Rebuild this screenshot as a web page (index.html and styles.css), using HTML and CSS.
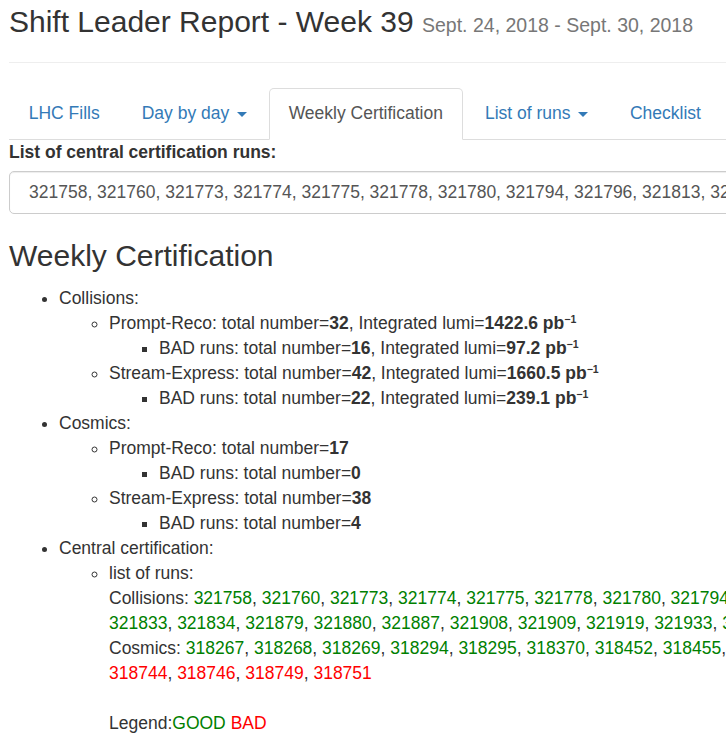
FILE: index.html
```html
<!DOCTYPE html>
<html lang="en">

<head>
    <meta charset="UTF-8">
    <meta name="viewport" content="width=device-width, initial-scale=1.0">
    <title>Shift Leader Report - Week 39</title>
    <link rel="stylesheet" href="styles.css">
</head>

<body>
    <div class="container">
        <div class="page-header">
            <h3>Shift Leader Report - Week 39 <small>Sept. 24, 2018 - Sept. 30, 2018</small></h3>
        </div>

        <ul class="nav-tabs">
            <li><a href="#">LHC Fills</a></li>
            <li><a href="#">Day by day <span class="caret"></span></a></li>
            <li class="active"><a href="#">Weekly Certification</a></li>
            <li><a href="#">List of runs <span class="caret"></span></a></li>
            <li><a href="#">Checklist</a></li>
        </ul>

        <div class="tab-content">
            <div class="form-group">
                <label for="runs">List of central certification runs:</label>
                <input type="text" id="runs" class="form-control" readonly
                    value="321758, 321760, 321773, 321774, 321775, 321778, 321780, 321794, 321796, 321813, 321833, 321834, 321879, 321880, 321887, 321908, 321909, 321919, 321933">
            </div>

            <h3 class="section">Weekly Certification</h3>
            <ul>
                <li>Collisions:
                    <ul>
                        <li>Prompt-Reco: total number=<b>32</b>, Integrated lumi=<b>1422.6 pb<sup>&minus;1</sup></b>
                            <ul>
                                <li>BAD runs: total number=<b>16</b>, Integrated lumi=<b>97.2 pb<sup>&minus;1</sup></b></li>
                            </ul>
                        </li>
                        <li>Stream-Express: total number=<b>42</b>, Integrated lumi=<b>1660.5 pb<sup>&minus;1</sup></b>
                            <ul>
                                <li>BAD runs: total number=<b>22</b>, Integrated lumi=<b>239.1 pb<sup>&minus;1</sup></b></li>
                            </ul>
                        </li>
                    </ul>
                </li>
                <li>Cosmics:
                    <ul>
                        <li>Prompt-Reco: total number=<b>17</b>
                            <ul>
                                <li>BAD runs: total number=<b>0</b></li>
                            </ul>
                        </li>
                        <li>Stream-Express: total number=<b>38</b>
                            <ul>
                                <li>BAD runs: total number=<b>4</b></li>
                            </ul>
                        </li>
                    </ul>
                </li>
                <li>Central certification:
                    <ul>
                        <li class="runs">list of runs:<br>
                            Collisions: <span class="good">321758</span>, <span class="good">321760</span>, <span class="good">321773</span>, <span class="good">321774</span>, <span class="good">321775</span>, <span class="good">321778</span>, <span class="good">321780</span>, <span class="good">321794</span>, <span class="good">321796</span>, <span class="good">321813</span>,<br>
                            <span class="good">321833</span>, <span class="good">321834</span>, <span class="good">321879</span>, <span class="good">321880</span>, <span class="good">321887</span>, <span class="good">321908</span>, <span class="good">321909</span>, <span class="good">321919</span>, <span class="good">321933</span>, <span class="good">321960</span>, <span class="good">321961</span><br>
                            Cosmics: <span class="good">318267</span>, <span class="good">318268</span>, <span class="good">318269</span>, <span class="good">318294</span>, <span class="good">318295</span>, <span class="good">318370</span>, <span class="good">318452</span>, <span class="good">318455</span>, <span class="good">318620</span>, <span class="good">318622</span>,<br>
                            <span class="bad">318744</span>, <span class="bad">318746</span>, <span class="bad">318749</span>, <span class="bad">318751</span><br>
                            <br>
                            Legend:<span class="good">GOOD</span> <span class="bad">BAD</span>
                        </li>
                    </ul>
                </li>
            </ul>
        </div>
    </div>
</body>

</html>
```

FILE: styles.css
```css
* {
    box-sizing: border-box;
}

html,
body {
    overflow: hidden;
}

body {
    margin: 0;
    font-family: "Liberation Sans", Arial, Helvetica, sans-serif;
    font-size: 17.5px;
    line-height: 25px;
    color: #333;
    background-color: #fff;
}

.container {
    width: 1200px;
    padding: 0 9px;
}

/* header */

.page-header {
    margin: 0 0 25px;
    padding-bottom: 7.25px;
    border-bottom: 1px solid #eee;
}

.page-header h3 {
    margin: 5px 0 12.5px;
    font-size: 30px;
    font-weight: 500;
    line-height: 33px;
}

.page-header small {
    font-size: 65%;
    font-weight: normal;
    color: #777;
}

/* tabs */

.nav-tabs {
    display: flex;
    margin: 0;
    padding: 0;
    list-style: none;
    border-bottom: 1px solid #ddd;
}

.nav-tabs li {
    margin-bottom: -1px;
}

.nav-tabs a {
    display: block;
    padding: 12.5px 18.75px;
    margin-right: 2.5px;
    line-height: 25px;
    color: #337ab7;
    text-decoration: none;
    border: 1px solid transparent;
    border-radius: 5px 5px 0 0;
}

.nav-tabs .active a {
    color: #555;
    background-color: #fff;
    border-color: #ddd;
    border-bottom-color: transparent;
}

.caret {
    display: inline-block;
    width: 0;
    height: 0;
    margin-left: 2.5px;
    vertical-align: middle;
    border-top: 5px solid;
    border-left: 5px solid transparent;
    border-right: 5px solid transparent;
}

/* run list field */

.form-group {
    margin-bottom: 18.75px;
}

.form-group label {
    display: inline-block;
    margin-bottom: 6.25px;
    font-weight: bold;
}

.form-control {
    display: block;
    width: 100%;
    height: 42.5px;
    padding: 7.5px 19px;
    font-family: inherit;
    font-size: 17.5px;
    color: #555;
    background-color: #fff;
    border: 1px solid #ccc;
    border-radius: 5px;
    box-shadow: inset 0 1px 1px rgba(0, 0, 0, .075);
    outline: none;
}

/* weekly summary */

.section {
    margin: 25px 0 14.5px;
    font-size: 30px;
    font-weight: 500;
    line-height: 33px;
}

ul {
    margin: 0 0 12.5px;
    padding-left: 50px;
}

ul ul {
    margin-bottom: 0;
}

sup {
    position: relative;
    top: -0.6em;
    font-size: 60%;
    line-height: 0;
    vertical-align: baseline;
}

.runs {
    white-space: nowrap;
}

.good {
    color: green;
}

.bad {
    color: red;
}
```
